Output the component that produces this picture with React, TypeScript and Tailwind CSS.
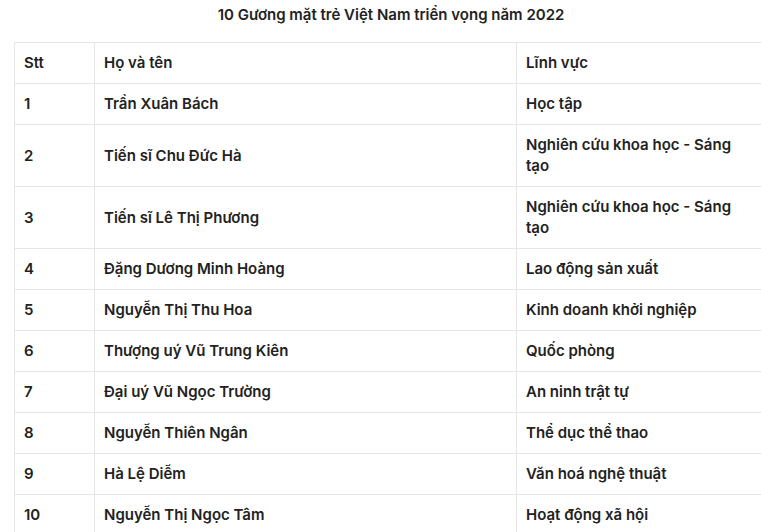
const rows = [
  ['1', 'Trần Xuân Bách', 'Học tập'],
  ['2', 'Tiến sĩ Chu Đức Hà', 'Nghiên cứu khoa học - Sáng|tạo'],
  ['3', 'Tiến sĩ Lê Thị Phương', 'Nghiên cứu khoa học - Sáng|tạo'],
  ['4', 'Đặng Dương Minh Hoàng', 'Lao động sản xuất'],
  ['5', 'Nguyễn Thị Thu Hoa', 'Kinh doanh khởi nghiệp'],
  ['6', 'Thượng uý Vũ Trung Kiên', 'Quốc phòng'],
  ['7', 'Đại uý Vũ Ngọc Trường', 'An ninh trật tự'],
  ['8', 'Nguyễn Thiên Ngân', 'Thể dục thể thao'],
  ['9', 'Hà Lệ Diễm', 'Văn hoá nghệ thuật'],
  ['10', 'Nguyễn Thị Ngọc Tâm', 'Hoạt động xã hội'],
];

const cell = 'border border-[#e6e6e6] pl-[9px] pr-[10px] pt-[9px] pb-[10px] text-left font-semibold';

export default function App() {
  return (
    <div className="w-[761px] h-[532px] overflow-hidden bg-white text-[#222] font-['Inter',sans-serif]">
      <div className="w-[768px] pl-[14px]">
        <h1 className="h-[31px] pt-[4px] text-center text-[15px] leading-[21px] font-semibold">
          10 Gương mặt trẻ Việt Nam triển vọng năm 2022
        </h1>
        <table className="mt-[11px] w-[754px] border-collapse table-fixed text-[15px] leading-[21px]">
          <colgroup>
            <col className="w-[80px]" />
            <col className="w-[422px]" />
            <col />
          </colgroup>
          <thead>
            <tr>
              <th className={cell}>Stt</th>
              <th className={cell}>Họ và tên</th>
              <th className={cell}>Lĩnh vực</th>
            </tr>
          </thead>
          <tbody>
            {rows.map((r) => (
              <tr key={r[0]}>
                <td className={cell}>{r[0]}</td>
                <td className={cell}>{r[1]}</td>
                <td className={cell + ' whitespace-nowrap'}>
                  {r[2].split('|').map((t, i) => (
                    <div key={i}>{t}</div>
                  ))}
                </td>
              </tr>
            ))}
          </tbody>
        </table>
      </div>
    </div>
  );
}
